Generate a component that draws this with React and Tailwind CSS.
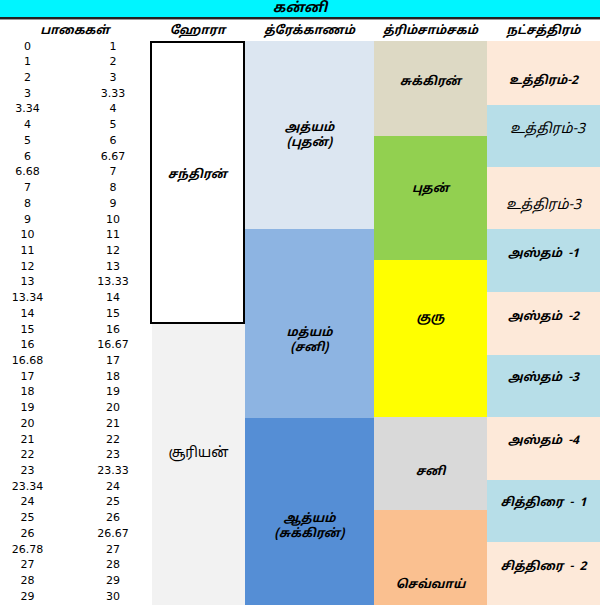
const tamil = { fontFamily: '"Noto Sans Tamil", "Noto Sans", "Lato", sans-serif' };

// degree ranges (from / to) as listed in the sheet
const rows = [
    ["0", "1"], ["1", "2"], ["2", "3"], ["3", "3.33"], ["3.34", "4"],
    ["4", "5"], ["5", "6"], ["6", "6.67"], ["6.68", "7"], ["7", "8"],
    ["8", "9"], ["9", "10"], ["10", "11"], ["11", "12"], ["12", "13"],
    ["13", "13.33"], ["13.34", "14"], ["14", "15"], ["15", "16"], ["16", "16.67"],
    ["16.68", "17"], ["17", "18"], ["18", "19"], ["19", "20"], ["20", "21"],
    ["21", "22"], ["22", "23"], ["23", "23.33"], ["23.34", "24"], ["24", "25"],
    ["25", "26"], ["26", "26.67"], ["26.78", "27"], ["27", "28"], ["28", "29"],
    ["29", "30"],
];

function DegreeColumns() {
    return (
        <div
            className="w-[150px] flex flex-col text-[11px] text-black -mt-[2px]"
            style={{ fontFamily: '"DejaVu Sans", Verdana, sans-serif' }}
        >
            {rows.map(([from, to], i) => (
                <div key={i} className="flex h-[15.72px] items-center">
                    <span className="w-[55px] text-center">{from}</span>
                    <span className="ml-[21px] w-[74px] text-center">{to}</span>
                </div>
            ))}
        </div>
    );
}

function Cell({ className, children }) {
    return (
        <div className={`flex flex-col items-center text-center text-black ${className}`}>
            {children}
        </div>
    );
}

export default function App() {
    return (
        <div className="w-[600px] h-[605px] overflow-hidden bg-white" style={tamil}>
            {/* Title */}
            <div className="h-[19px] bg-[#00f5ff] border-b-2 border-[#222] flex items-center justify-center">
                <span className="text-[14px] font-bold italic leading-none">கன்னி</span>
            </div>

            {/* Column headings */}
            <div className="h-[22px] flex items-center text-[12px] font-bold italic border-t border-[#9a9a9a]">
                <div className="w-[150px] text-center">பாகைகள்</div>
                <div className="w-[95px] text-center">ஹோரா</div>
                <div className="w-[129px] text-center">த்ரேக்காணம்</div>
                <div className="w-[113px] text-center">த்ரிம்சாம்சகம்</div>
                <div className="w-[113px] text-center">நட்சத்திரம்</div>
            </div>

            <div className="flex">
                <DegreeColumns />

                {/* Hora */}
                <div className="w-[95px] flex flex-col">
                    <Cell className="h-[283px] border-2 border-black bg-white justify-center pb-[16px]">
                        <span className="text-[12px] font-bold italic">சந்திரன்</span>
                    </Cell>
                    <Cell className="h-[290px] ml-[2px] bg-[#f2f2f2] justify-center pb-[32px]">
                        <span className="text-[14px]">சூரியன்</span>
                    </Cell>
                </div>

                {/* Drekkana */}
                <div className="w-[129px] flex flex-col text-[12px] font-bold italic leading-[15px]">
                    <Cell className="h-[188px] bg-[#dce6f1] justify-center pt-[2px]">
                        <span>அத்யம்</span>
                        <span>(புதன்)</span>
                    </Cell>
                    <Cell className="h-[189px] bg-[#8db4e2] justify-center pt-[34px]">
                        <span>மத்யம்</span>
                        <span>(சனி)</span>
                    </Cell>
                    <Cell className="h-[196px] bg-[#558ed5] justify-center pt-[22px]">
                        <span>ஆத்யம்</span>
                        <span>(சுக்கிரன்)</span>
                    </Cell>
                </div>

                {/* Trimsamsa */}
                <div className="w-[113px] flex flex-col text-[12px] font-bold italic">
                    <Cell className="h-[95px] bg-[#ddd9c4] justify-center pb-[14px]">
                        <span>சுக்கிரன்</span>
                    </Cell>
                    <Cell className="h-[124px] bg-[#92d050] justify-center pb-[18px]">
                        <span>புதன்</span>
                    </Cell>
                    <Cell className="h-[157px] bg-[#ffff00] justify-center pb-[42px]">
                        <span>குரு</span>
                    </Cell>
                    <Cell className="h-[93px] bg-[#d9d9d9] justify-center pt-[16px]">
                        <span>சனி</span>
                    </Cell>
                    <Cell className="h-[104px] bg-[#fac090] justify-end pb-[20px]">
                        <span>செவ்வாய்</span>
                    </Cell>
                </div>

                {/* Nakshatra */}
                <div className="w-[113px] flex flex-col text-[12px] italic">
                    <Cell className="h-[64px] bg-[#fde9d9] justify-center pt-[16px] font-bold">
                        <span>உத்திரம்-2</span>
                    </Cell>
                    <Cell className="h-[62px] bg-[#b7dee8] justify-center pb-[14px] pl-[8px]">
                        <span className="text-[14px]">உத்திரம்-3</span>
                    </Cell>
                    <Cell className="h-[62px] bg-[#fde9d9] justify-center pt-[14px]">
                        <span className="text-[14px]">உத்திரம்-3</span>
                    </Cell>
                    <Cell className="h-[63px] bg-[#b7dee8] justify-center pb-[14px] font-bold">
                        <span>அஸ்தம் &nbsp;-1</span>
                    </Cell>
                    <Cell className="h-[63px] bg-[#fde9d9] justify-center pb-[14px] font-bold">
                        <span>அஸ்தம் &nbsp;-2</span>
                    </Cell>
                    <Cell className="h-[62px] bg-[#b7dee8] justify-center pb-[16px] font-bold">
                        <span>அஸ்தம் &nbsp;-3</span>
                    </Cell>
                    <Cell className="h-[63px] bg-[#fde9d9] justify-center pb-[16px] font-bold">
                        <span>அஸ்தம் &nbsp;-4</span>
                    </Cell>
                    <Cell className="h-[62px] bg-[#b7dee8] justify-center pb-[16px] font-bold">
                        <span>சித்திரை &nbsp;- &nbsp;1</span>
                    </Cell>
                    <Cell className="h-[70px] bg-[#fde9d9] justify-center pb-[20px] font-bold">
                        <span>சித்திரை &nbsp;- &nbsp;2</span>
                    </Cell>
                </div>
            </div>
        </div>
    );
}
